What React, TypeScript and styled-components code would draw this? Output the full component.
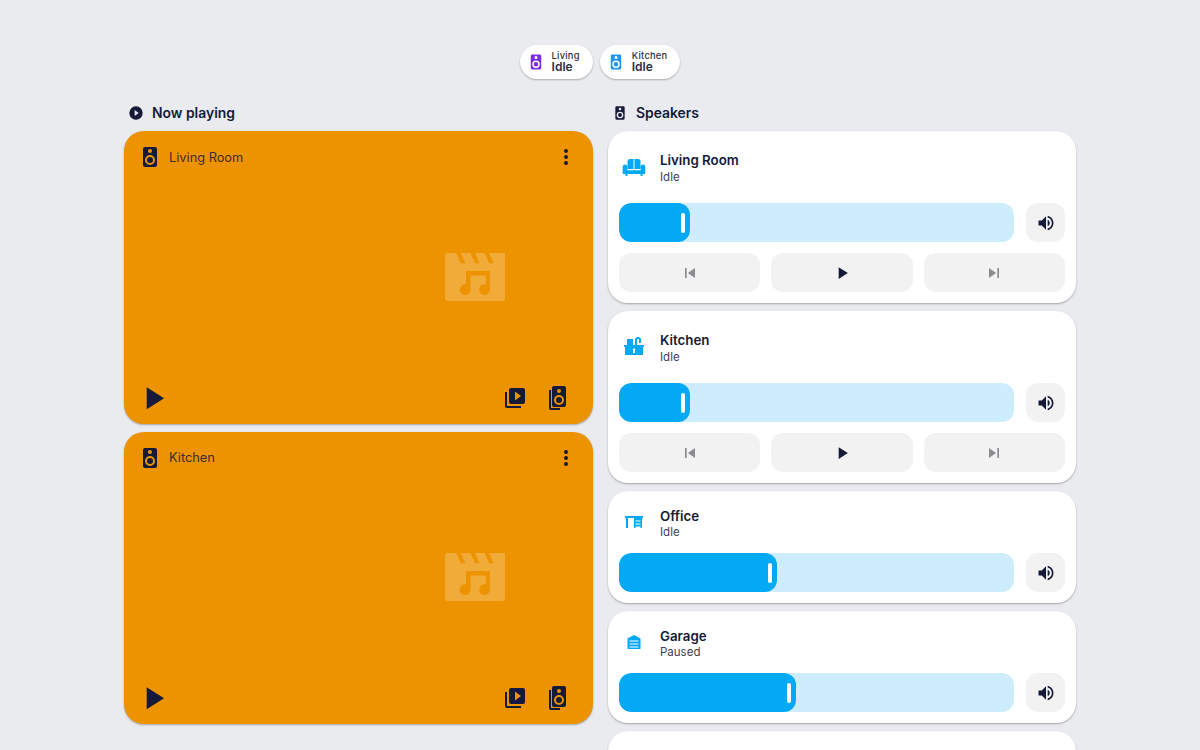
import React from "react";
import styled, { createGlobalStyle } from "styled-components";

const Global = createGlobalStyle`
  html, body { margin: 0; padding: 0; height: 750px; overflow: hidden; background: #e9ebef; }
  body { font-family: Inter, "Liberation Sans", sans-serif; color: #141a38; }
`;

const P = {
  speaker: "M12,12A3,3 0 0,0 9,15A3,3 0 0,0 12,18A3,3 0 0,0 15,15A3,3 0 0,0 12,12M12,20A5,5 0 0,1 7,15A5,5 0 0,1 12,10A5,5 0 0,1 17,15A5,5 0 0,1 12,20M12,4A2,2 0 0,1 14,6A2,2 0 0,1 12,8C10.89,8 10,7.1 10,6C10,4.89 10.89,4 12,4M17,2H7C5.89,2 5,2.89 5,4V20A2,2 0 0,0 7,22H17A2,2 0 0,0 19,20V4C19,2.89 18.1,2 17,2Z",
  playCircle: "M10,16.5V7.5L16,12M12,2A10,10 0 0,0 2,12A10,10 0 0,0 12,22A10,10 0 0,0 22,12A10,10 0 0,0 12,2Z",
  dots: "M12,16A2,2 0 0,1 14,18A2,2 0 0,1 12,20A2,2 0 0,1 10,18A2,2 0 0,1 12,16M12,10A2,2 0 0,1 14,12A2,2 0 0,1 12,14A2,2 0 0,1 10,12A2,2 0 0,1 12,10M12,4A2,2 0 0,1 14,6A2,2 0 0,1 12,8A2,2 0 0,1 10,6A2,2 0 0,1 12,4Z",
  play: "M8,5.14V19.14L19,12.14L8,5.14Z",
  prev: "M6,18V6H8V18H6M9.5,12L18,6V18L9.5,12Z",
  next: "M16,18H18V6H16M6,18L14.5,12L6,6V18Z",
  volume: "M14,3.23V5.29C16.89,6.15 19,8.83 19,12C19,15.17 16.89,17.84 14,18.7V20.77C18,19.86 21,16.28 21,12C21,7.72 18,4.14 14,3.23M16.5,12C16.5,10.23 15.5,8.71 14,7.97V16C15.5,15.29 16.5,13.76 16.5,12M3,9V15H7L12,20V4L7,9H3Z",
  playBoxMultiple: "M4,6H2V20A2,2 0 0,0 4,22H18V20H4V6M20,2H8A2,2 0 0,0 6,4V16A2,2 0 0,0 8,18H20A2,2 0 0,0 22,16V4A2,2 0 0,0 20,2M12,14.5V5.5L18,10L12,14.5Z",
  speakerMultiple: "M4,4H6V22H15V24H6A2,2 0 0,1 4,22ZM9,0H19A2,2 0 0,1 21,2V19A2,2 0 0,1 19,21H9A2,2 0 0,1 7,19V2A2,2 0 0,1 9,0ZM12,5a2,2 0 1,0 4,0a2,2 0 1,0 -4,0ZM9,14a5,5 0 1,0 10,0a5,5 0 1,0 -10,0ZM11,14a3,3 0 1,0 6,0a3,3 0 1,0 -6,0Z",
  movieMusic: "M3,4H22V19A1,1 0 0,1 21,20H3A1,1 0 0,1 2,19V5A1,1 0 0,1 3,4ZM5.8,4H7.3L8.8,7.4H7.3ZM10.5,4H12L13.5,7.4H12ZM15.2,4H16.7L18.2,7.4H16.7ZM9,10H17V16.2A1.8,1.8 0 1,1 15.6,14.44V11.5H10.5V16.2A1.8,1.8 0 1,1 9,14.44Z",
  sofa: "M8,4H11.5V14H5.5V6.5A2.5,2.5 0 0,1 8,4ZM12.5,4H16A2.5,2.5 0 0,1 18.5,6.5V14H12.5ZM3,9.5A2.3,2.3 0 0,1 5.3,11.8V15.3H18.7V11.8A2.3,2.3 0 0,1 23.3,11.8V19H20.5V21H18.5V19H5.5V21H3.5V19H0.7V11.8A2.3,2.3 0 0,1 3,9.5Z",
  kitchen: "M2,10H22V12H21V20H3V12H2ZM11,13.5H13V18H11ZM5,4H11V10H5ZM13,10V5A3,3 0 0,1 19,5V8H17V5A1,1 0 0,0 15,5V10Z",
  desk: "M3,6H21V8H20V18H18.5V16.5H13.5V18H12V8H6V18H4V8H3ZM13.5,10.5H18.5V11.5H13.5ZM13.5,13.5H18.5V14.5H13.5Z",
  garage: "M12,5L5.5,8.5V19H18.5V8.5ZM7.5,10.5H16.5V11.5H7.5ZM7.5,13.5H16.5V14.5H7.5ZM7.5,16.5H16.5V17.5H7.5Z",
};

const Ic = styled.svg<{ $s: number; $c?: string }>`
  width: ${(p) => p.$s}px;
  height: ${(p) => p.$s}px;
  flex: none;
  display: block;
  fill: ${(p) => p.$c ?? "#141a38"};
`;

const Icon = ({ d, s = 24, c }: { d: string; s?: number; c?: string }) => (
  <Ic $s={s} $c={c} viewBox="0 0 24 24"><path d={d} fillRule="evenodd" /></Ic>
);

const Page = styled.div`
  width: 952px;
  margin: 0 auto;
  padding-top: 45px;
  box-sizing: border-box;
`;
const Pills = styled.div`
  display: flex;
  justify-content: center;
  gap: 7px;
  height: 34px;
`;
const Pill = styled.div`
  height: 34px;
  box-sizing: border-box;
  background: #fff;
  border-radius: 17px;
  box-shadow: 0 1px 2px rgba(0, 0, 0, 0.28);
  display: flex;
  align-items: center;
  gap: 7px;
  padding: 0 13px 0 7px;
`;
const PillText = styled.div`
  display: flex;
  flex-direction: column;
  align-items: flex-start;
  padding-bottom: 2px;
`;
const PillTop = styled.span`
  font-size: 9.3px;
  line-height: 11px;
  font-weight: 500;
  letter-spacing: 0.25px;
  color: #2a2f4a;
`;
const PillBottom = styled.span`
  font-size: 12px;
  line-height: 12px;
  font-weight: 600;
  color: #2a2f4a;
`;
const Columns = styled.div`
  display: grid;
  grid-template-columns: 469px 468px;
  column-gap: 15px;
  margin-top: 18px;
`;
const Column = styled.div`
  display: flex;
  flex-direction: column;
  gap: 8px;
`;
const Heading = styled.div`
  height: 32px;
  display: flex;
  align-items: center;
  gap: 8px;
  padding-left: 4px;
  margin-bottom: -6px;
  font-size: 13.9px;
  font-weight: 600;
  color: #141a38;
`;
const PlayerCard = styled.div`
  height: 292.5px;
  background: #ee9300;
  border-radius: 20px;
  box-shadow: 0 1px 2px rgba(0, 0, 0, 0.3);
  display: flex;
  flex-direction: column;
  padding: 14px 15px 10px 14px;
  box-sizing: border-box;
`;
const PlayerTop = styled.div`
  display: flex;
  align-items: center;
  gap: 7px;
  height: 24px;
  font-size: 12.8px;
  color: #3a2f2a;
`;
const PlayerName = styled.span`
  flex: 1;
`;
const Art = styled.div`
  flex: 1;
  display: flex;
  align-items: center;
  justify-content: flex-end;
  padding: 3px 67px 0 0;
  opacity: 0.22;
`;
const PlayerBottom = styled.div`
  display: flex;
  align-items: center;
  height: 32px;
  margin-left: -4px;
  margin-right: 9px;
`;
const Spacer = styled.div`
  flex: 1;
`;
const BottomIcons = styled.div`
  display: flex;
  gap: 18px;
`;
const Speaker = styled.div`
  background: #fff;
  border-radius: 20px;
  box-shadow: 0 1px 2px rgba(0, 0, 0, 0.3);
  padding: 11px;
  box-sizing: border-box;
  display: flex;
  flex-direction: column;
  gap: 11px;
`;
const Head = styled.div<{ $h: number }>`
  height: ${(p) => p.$h}px;
  display: flex;
  align-items: center;
  gap: 14px;
  padding-left: 3px;
`;
const Titles = styled.div<{ $pad: number; $gap: number }>`
  display: flex;
  flex-direction: column;
  gap: ${(p) => p.$gap}px;
  padding-top: ${(p) => p.$pad}px;
`;
const Name = styled.span`
  font-size: 13.3px;
  line-height: 16px;
  font-weight: 600;
  color: #141a38;
`;
const State = styled.span`
  font-size: 11.5px;
  line-height: 14px;
  color: #3c4058;
`;
const SliderRow = styled.div`
  display: flex;
  gap: 12px;
`;
const Track = styled.div`
  flex: 1;
  height: 39px;
  background: #cdedfd;
  border-radius: 12px;
  overflow: hidden;
  display: flex;
`;
const Fill = styled.div`
  height: 39px;
  background: #03a9f4;
  border-radius: 12px;
  position: relative;
`;
const Thumb = styled.div`
  position: absolute;
  right: 5px;
  top: 10px;
  width: 4px;
  height: 20px;
  border-radius: 2px;
  background: #fff;
`;
const Btn = styled.div`
  height: 39px;
  border-radius: 12px;
  background: #f2f2f3;
  display: flex;
  align-items: center;
  justify-content: center;
`;
const VolBtn = styled(Btn)`
  width: 39px;
  flex: none;
`;
const Controls = styled.div`
  display: grid;
  grid-template-columns: repeat(3, 1fr);
  gap: 11px;
`;
const Last = styled(Speaker)`
  height: 60px;
`;

const Players = ["Living Room", "Kitchen"];
const Spk = [
  { n: "Living Room", s: "Idle", i: P.sofa, w: 71, c: true, h: 50, pad: 1, gap: 2 },
  { n: "Kitchen", s: "Idle", i: P.kitchen, w: 71, c: true, h: 50, pad: 1, gap: 2 },
  { n: "Office", s: "Idle", i: P.desk, w: 158, c: false, h: 40, pad: 3, gap: 1 },
  { n: "Garage", s: "Paused", i: P.garage, w: 177, c: false, h: 40, pad: 3, gap: 1 },
];

export default function App() {
  return (
    <>
      <Global />
      <Page>
        <Pills>
          <Pill>
            <Icon d={P.speaker} s={18} c="#7c2ee6" />
            <PillText><PillTop>Living</PillTop><PillBottom>Idle</PillBottom></PillText>
          </Pill>
          <Pill>
            <Icon d={P.speaker} s={18} c="#2196f3" />
            <PillText><PillTop>Kitchen</PillTop><PillBottom>Idle</PillBottom></PillText>
          </Pill>
        </Pills>
        <Columns>
          <Column>
            <Heading><Icon d={P.playCircle} s={16} />Now playing</Heading>
            {Players.map((n) => (
              <PlayerCard key={n}>
                <PlayerTop>
                  <Icon d={P.speaker} s={24} />
                  <PlayerName>{n}</PlayerName>
                  <Icon d={P.dots} s={24} />
                </PlayerTop>
                <Art><Icon d={P.movieMusic} s={72} c="#ffffff" /></Art>
                <PlayerBottom>
                  <Icon d={P.play} s={38} />
                  <Spacer />
                  <BottomIcons>
                    <Icon d={P.playBoxMultiple} s={24} />
                    <Icon d={P.speakerMultiple} s={24} />
                  </BottomIcons>
                </PlayerBottom>
              </PlayerCard>
            ))}
          </Column>
          <Column>
            <Heading><Icon d={P.speaker} s={16} />Speakers</Heading>
            {Spk.map((x) => (
              <Speaker key={x.n}>
                <Head $h={x.h}>
                  <Icon d={x.i} s={24} c="#03a9f4" />
                  <Titles $pad={x.pad} $gap={x.gap}><Name>{x.n}</Name><State>{x.s}</State></Titles>
                </Head>
                <SliderRow>
                  <Track><Fill style={{ width: x.w }}><Thumb /></Fill></Track>
                  <VolBtn><Icon d={P.volume} s={20} /></VolBtn>
                </SliderRow>
                {x.c && (
                  <Controls>
                    <Btn><Icon d={P.prev} s={20} c="#8b8c90" /></Btn>
                    <Btn><Icon d={P.play} s={20} /></Btn>
                    <Btn><Icon d={P.next} s={20} c="#8b8c90" /></Btn>
                  </Controls>
                )}
              </Speaker>
            ))}
            <Last />
          </Column>
        </Columns>
      </Page>
    </>
  );
}
